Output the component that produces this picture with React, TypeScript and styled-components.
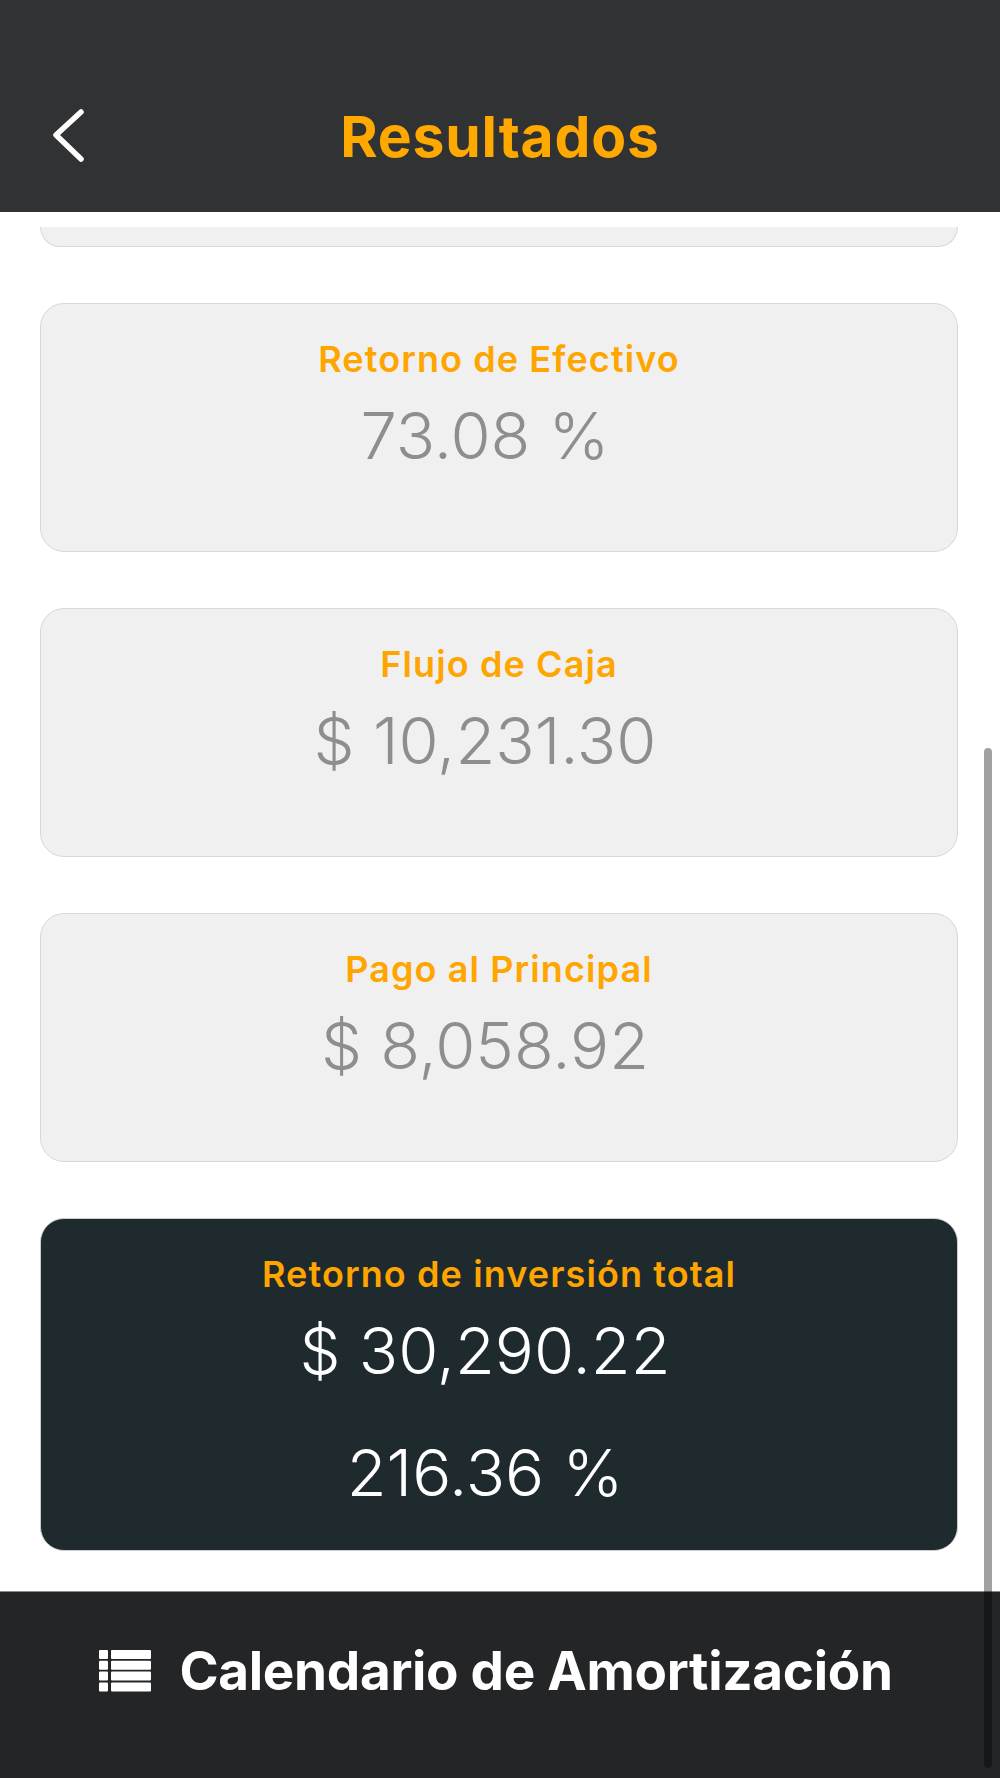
import React from "react";
import styled, { createGlobalStyle } from "styled-components";

const GlobalStyle = createGlobalStyle`
  html, body {
    margin: 0;
    padding: 0;
    background: #ffffff;
  }
  body {
    font-family: Inter, "Noto Sans", "Liberation Sans", sans-serif;
  }
  * { box-sizing: border-box; }
`;

const Screen = styled.div`
  position: relative;
  width: 1000px;
  height: 1778px;
  display: flex;
  flex-direction: column;
  overflow: hidden;
  background: #ffffff;
`;

const Header = styled.header`
  height: 212px;
  flex: none;
  background: #313234;
  display: grid;
  grid-template-columns: 1fr auto 1fr;
  align-items: center;
  padding-top: 60px;
`;

const BackButton = styled.button`
  justify-self: start;
  margin-left: 50px;
  width: 40px;
  height: 56px;
  padding: 0;
  border: none;
  background: transparent;
  display: flex;
  align-items: center;
  justify-content: center;
  cursor: pointer;
`;

const Title = styled.h1`
  margin: 0;
  font-size: 57px;
  line-height: 1;
  font-weight: 700;
  color: #ffa800;
  letter-spacing: 0.8px;
`;

const Main = styled.main`
  flex: 1;
  overflow: hidden;
  display: flex;
  flex-direction: column;
  gap: 56px;
  padding: 15px 42px 0 40px;
`;

const CardStub = styled.div`
  height: 20px;
  flex: none;
  background: #f0f0f0;
  border: 1.5px solid #d8d8d8;
  border-top: none;
  border-radius: 0 0 24px 24px;
`;

const Card = styled.section<{ $dark?: boolean }>`
  flex: none;
  height: ${(p) => (p.$dark ? "auto" : "249px")};
  background: ${(p) => (p.$dark ? "#1f2a2e" : "#f0f0f0")};
  border: 1.5px solid ${(p) => (p.$dark ? "#c9cdce" : "#d8d8d8")};
  border-radius: 24px;
  padding: 33px 0 ${(p) => (p.$dark ? "38px" : "0")};
  display: flex;
  flex-direction: column;
  align-items: center;
`;

const CardTitle = styled.h2`
  margin: 0;
  font-size: 36px;
  line-height: 44px;
  font-weight: 600;
  letter-spacing: 1.1px;
  color: #ffa500;
`;

const Value = styled.div<{ $dark?: boolean; $spaced?: boolean }>`
  margin-top: ${(p) => (p.$spaced ? "44px" : "16px")};
  padding-right: 28px;
  font-size: 65px;
  line-height: 78px;
  font-weight: 350;
  color: ${(p) => (p.$dark ? "#ffffff" : "#8e8e8e")};
`;

const BottomBar = styled.footer`
  height: 187px;
  flex: none;
  background: #242527;
  border-top: 1.5px solid #8c8c8c;
  display: flex;
  justify-content: center;
  align-items: flex-start;
  padding-top: 53px;
  padding-right: 8px;
  gap: 28px;
`;

const BarLabel = styled.span`
  font-size: 53px;
  line-height: 1;
  font-weight: 700;
  letter-spacing: -0.3px;
  color: #ffffff;
`;

const IconBox = styled.span`
  display: flex;
  margin-top: 5px;
`;

const ScrollThumb = styled.div`
  position: absolute;
  right: 8px;
  top: 748px;
  width: 8px;
  height: 1020px;
  border-radius: 4px;
  background: rgba(0, 0, 0, 0.37);
`;

const ChevronLeft = () => (
  <svg width="40" height="56" viewBox="0 0 40 56" fill="none">
    <path
      d="M31 4 L6 27 L31 51"
      stroke="#ffffff"
      strokeWidth="5.5"
      strokeLinecap="round"
      strokeLinejoin="round"
    />
  </svg>
);

const ListIcon = () => (
  <svg width="52" height="42" viewBox="0 0 52 42">
    {[0, 1, 2, 3].map((i) => (
      <g key={i} fill="#ffffff">
        <rect x="0" y={i * 10.8} width="9" height="9" rx="1" />
        <rect x="12" y={i * 10.8} width="40" height="9" rx="1" />
      </g>
    ))}
  </svg>
);

type Item = { title: string; values: string[]; dark?: boolean };

const items: Item[] = [
  { title: "Retorno de Efectivo", values: ["73.08 %"] },
  { title: "Flujo de Caja", values: ["$ 10,231.30"] },
  { title: "Pago al Principal", values: ["$ 8,058.92"] },
  {
    title: "Retorno de inversión total",
    values: ["$ 30,290.22", "216.36 %"],
    dark: true,
  },
];

export default function App() {
  return (
    <>
      <GlobalStyle />
      <Screen>
        <Header>
          <BackButton aria-label="Atrás">
            <ChevronLeft />
          </BackButton>
          <Title>Resultados</Title>
          <span />
        </Header>
        <Main>
          <CardStub />
          {items.map((it) => (
            <Card key={it.title} $dark={it.dark}>
              <CardTitle>{it.title}</CardTitle>
              {it.values.map((v, i) => (
                <Value key={v} $dark={it.dark} $spaced={i > 0}>
                  {v}
                </Value>
              ))}
            </Card>
          ))}
        </Main>
        <BottomBar>
          <IconBox>
            <ListIcon />
          </IconBox>
          <BarLabel>Calendario de Amortización</BarLabel>
        </BottomBar>
        <ScrollThumb />
      </Screen>
    </>
  );
}
